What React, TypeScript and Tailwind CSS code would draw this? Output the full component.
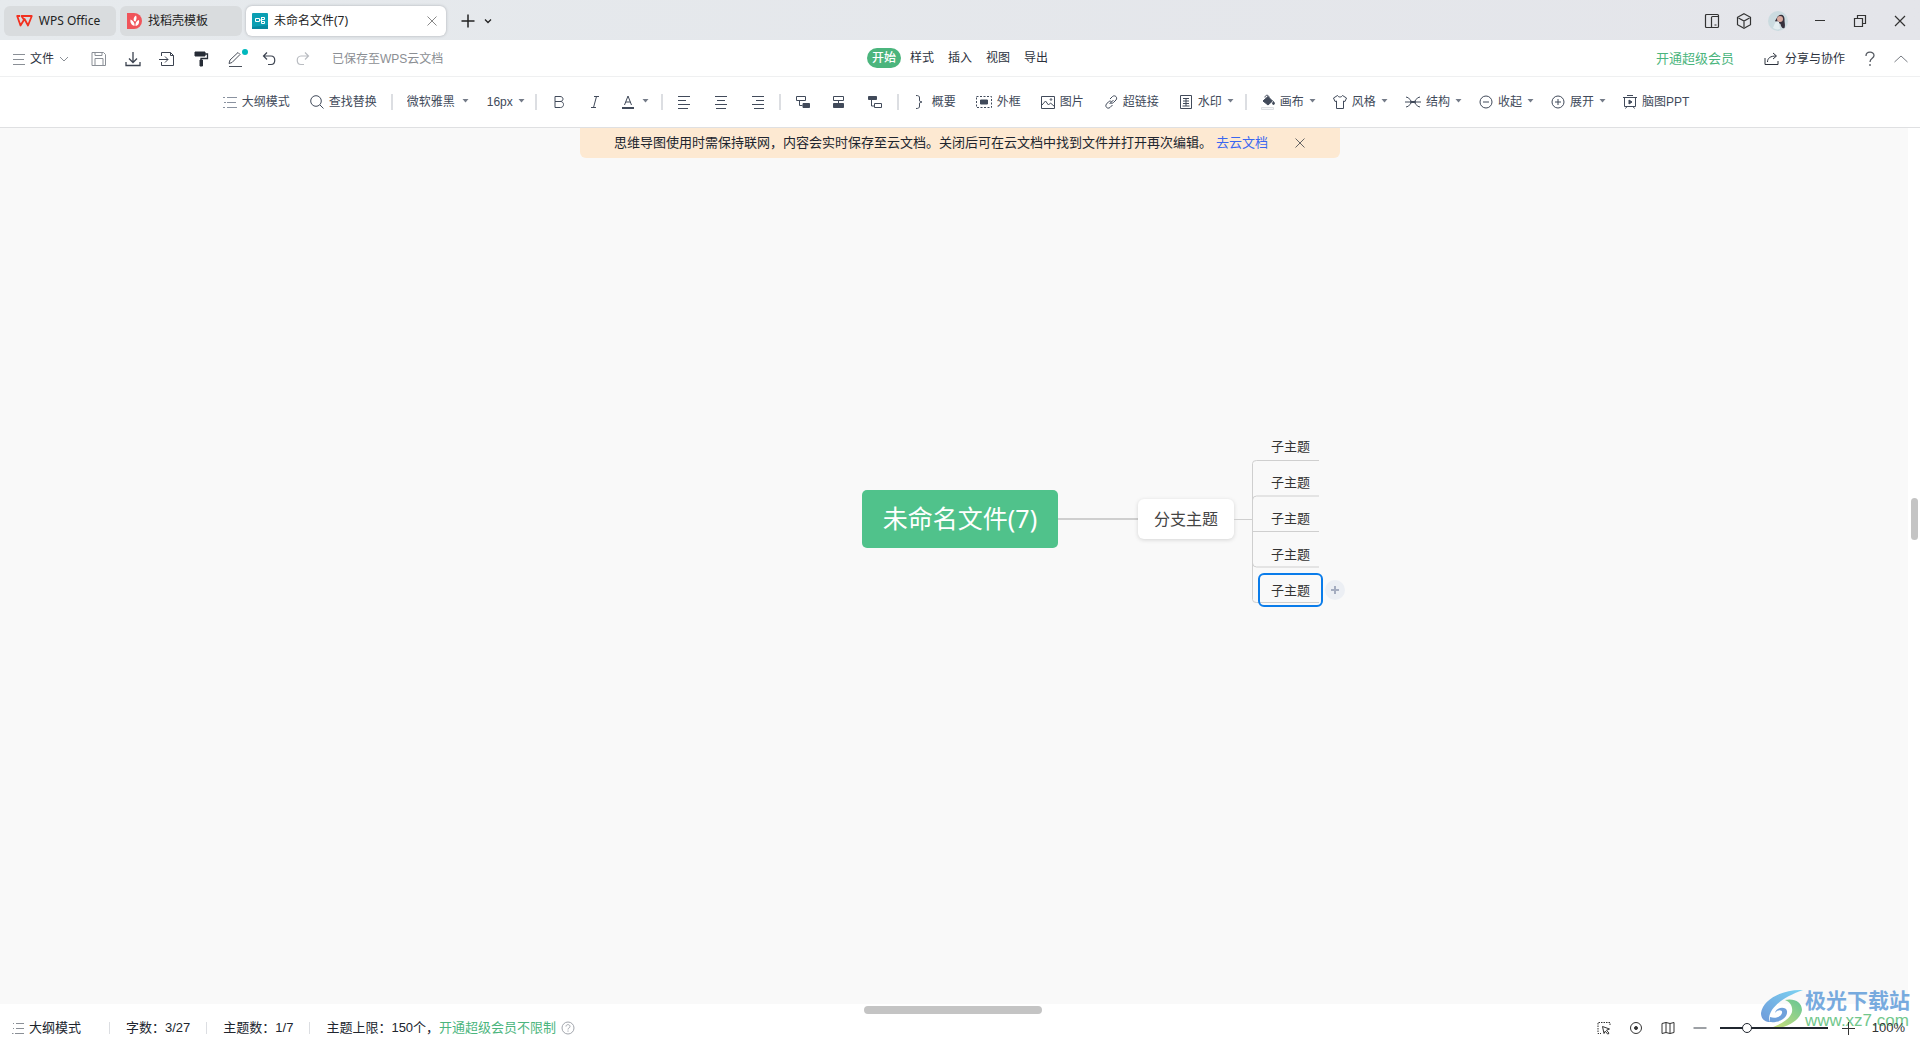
import { useState } from "react";
import type { ReactNode } from "react";
import clsx from "clsx";

const Svg = ({ w = 16, h = 16, sw = 1, children }: { w?: number; h?: number; sw?: number; children: ReactNode }) => (
  <svg width={w} height={h} viewBox={`0 0 ${w} ${h}`} fill="none" stroke="currentColor" strokeWidth={sw} className="shrink-0">
    {children}
  </svg>
);

const OutlineIcon = () => (
  <Svg w={14} h={14}>
    <path d="M4 2.5h10M4 7.5h9M4 12.5h10M0 2.5h2M1 7.5h2M0 12.5h2" />
  </Svg>
);

const Caret = () => (
  <svg width="7" height="6" viewBox="0 0 7 6" fill="#747b88" className="shrink-0">
    <path d="M0.5 0h6L3.5 3.5z" />
  </svg>
);

const Sep = () => <span className="mx-1 h-4 w-0.5 shrink-0 bg-[#dcdee2]" />;

const titleTools = [
  { id: "save", label: "保存", tone: "text-[#8a8f96]", icon: <Svg><path d="M1 1.5h11.5l2 2v11H1zM4 14.5v-7h8v7M4 1.5v3h7v-3" /></Svg> },
  { id: "download", label: "下载", tone: "text-[#3c4350]", icon: <Svg sw={1.3}><path d="M8 1v10M4 7.500l4 4 4-4M1 11v3.500h14V11" /></Svg> },
  { id: "export", label: "导出为", tone: "text-[#3c4350]", icon: <Svg><path d="M2.5 5V1.5h9l3 3v10h-12V11M0 8.5h9M6 5.500l3 3-3 3M11.5 1.500v3h3" /></Svg> },
  { id: "brush", label: "格式刷", tone: "text-[#262c36]", icon: <Svg><path d="M2 1h10v4H2z" fill="currentColor" /><path d="M12 3h2.5v4.5H8V15" strokeWidth="1.3" /><path d="M7 9h2.5v6H7z" fill="currentColor" /></Svg> },
  { id: "pen", label: "画笔", tone: "text-[#4a505b]", icon: <Svg><path d="M2 12.5l1-3.5L11 1.5l2 2L5 11.5zM2 15.5h13" /></Svg>, dot: true },
  { id: "undo", label: "撤销", tone: "text-[#3c4350]", icon: <Svg sw={1.2}><path d="M6 1.5L2.5 5 6 8.5M2.5 5H10c5 0 5 8.5 0 8.5H7" /></Svg> },
  { id: "redo", label: "重做", tone: "text-[#b9bcc1]", icon: <Svg sw={1.2}><path d="M10 1.5L13.5 5 10 8.5M13.5 5H6c-5 0-5 8.5 0 8.5H9" /></Svg> },
];

const menus = ["开始", "样式", "插入", "视图", "导出"];

const aligns = [
  { label: "左对齐", d: "M1 2.5h12M1 6.5h8M1 10.5h12M1 14.5h10" },
  { label: "居中", d: "M2 2.5h12M4 6.5h8M2 10.5h12M3 14.5h10" },
  { label: "右对齐", d: "M3 2.5h12M7 6.5h8M3 10.5h12M5 14.5h10" },
];

const topics = [
  { label: "子主题", icon: <Svg><path d="M1.5 2.5h9v4h-9zM4.5 6.5v5h3" /><path d="M8 9.500h6.5v4H8z" fill="currentColor" /></Svg> },
  { label: "同级主题", icon: <Svg><path d="M2.5 2.5h10v4h-10zM7.5 6.5v3" /><path d="M2.5 9.5h10v4h-10z" fill="currentColor" /></Svg> },
  { label: "父主题", icon: <Svg><path d="M1.5 2.5h8v3h-8z" fill="currentColor" /><path d="M4.5 6v6h3M7.5 9.5h7v4h-7z" /></Svg> },
];

type Tool = { label: string; icon: ReactNode; caret?: boolean };

const insertTools: Tool[] = [
  { label: "概要", icon: <Svg w={14}><path d="M3 1.5c2.5 0 3.500.5 3.500 2.500v2c0 1.500.5 2 2.500 2-2 0-2.500.5-2.500 2v2c0 2-1 2.500-3.500 2.500" /></Svg> },
  { label: "外框", icon: <Svg><path d="M.5 2.5h15v11H.5z" strokeDasharray="2 1.5" /><path d="M4.5 6h7v4h-7z" fill="currentColor" /></Svg> },
  { label: "图片", icon: <Svg w={14}><path d="M.5 2.5h13v12H.5zM1 11l3.5-4 3 4 2-2 4 3.5" /><circle cx="10" cy="5.5" r=".8" /></Svg> },
  { label: "超链接", icon: <Svg w={14}><path d="M5.5 10l4-4M6 5l2.5-2.5c2.500-2 5.500 1 3.500 3.500L9.500 8.500c-1 1-2.300 1-3.200.3M8.500 11L6 13.500c-2.500 2-5.500-1-3.500-3.500L4.500 7.800c1-.9 2-.9 3-.3" /></Svg> },
  { label: "水印", caret: true, icon: <Svg w={14}><path d="M1.5 1.5h11v13h-11z" /><path d="M4 4.5h6M4 7h6M4 9.5h6M3.5 12h7M7 4v8" /></Svg> },
];

const canvasTools: Tool[] = [
  { label: "画布", caret: true, icon: <Svg w={14}><path d="M2 7l5-4.5L11.5 7 7 11z" fill="currentColor" /><path d="M4 3.5c0-3 4-3 4 0" /><path d="M12.5 7.5c-1.5 2-1 3 0 3s1.500-1 0-3z" fill="currentColor" /><path d="M.5 13.5h12v2H.5z" stroke="#dcdee2" fill="#f6f7f8" /></Svg> },
  { label: "风格", caret: true, icon: <Svg w={14}><path d="M4.500 1.500L.5 4l1.500 3.500 1.500-.5v7.500h7V7l1.500.5L13.500 4l-4-2.500c-1 2-4 2-5 0z" /></Svg> },
  { label: "结构", caret: true, icon: <Svg><path d="M1 3c4 0 4 5 7 5s3-5 7-5M1 13c4 0 4-5 7-5s3 5 7 5M0 8h16" /><path d="M5.5 7.500h5v1h-5z" fill="currentColor" /></Svg> },
  { label: "收起", caret: true, icon: <Svg w={14}><circle cx="7" cy="8" r="6" /><path d="M4 8h6" /></Svg> },
  { label: "展开", caret: true, icon: <Svg w={14}><circle cx="7" cy="8" r="6" /><path d="M4 8h6M7 5v6" /></Svg> },
  { label: "脑图PPT", icon: <Svg w={14}><path d="M4 1.5h6M0 3.5h14M1.5 3.5v9h11v-9M4 12.5l-1.5 2M10 12.5l1.5 2" /><path d="M6 6l3 2-3 2z" fill="currentColor" /></Svg> },
];

const ToolButton = ({ tool }: { tool: Tool }) => (
  <button className={clsx("flex h-7 items-center gap-[5px] whitespace-nowrap pl-[10px]", tool.caret ? "pr-[7px]" : "pr-[10px]")}>
    {tool.icon}
    <span>{tool.label}</span>
    {tool.caret && <Caret />}
  </button>
);

const IconButton = ({ label, children }: { label: string; children: ReactNode }) => (
  <button aria-label={label} className="flex h-7 w-9 items-center justify-center">
    {children}
  </button>
);

const TitleBar = () => (
  <header className="flex h-10 items-center bg-gradient-to-r from-[#e6eaed] to-[#e4e5ea] pl-1 pt-0.5 font-['Noto_Sans','Noto_Sans_CJK_SC',sans-serif] text-[12px] text-[#222]">
    <button className="flex h-[30px] w-28 items-center justify-center gap-[6px] rounded-md bg-[#d9dcde] pr-1">
      <svg width="17" height="12" viewBox="0 0 17 12" fill="none" stroke="#f2301f" strokeWidth="1.8" strokeLinejoin="round">
        <path d="M4 1H1.200l3.300 9.500L8.500 4l3.500 6.500L15.800 1H5.500l3 4.500" />
      </svg>
      WPS Office
    </button>
    <button className="ml-1 flex h-[30px] w-[122px] items-center gap-[6px] rounded-md bg-[#d9dcde] pl-[7px]">
      <svg width="15" height="16" viewBox="0 0 15 16">
        <path d="M0 0h7a8 8 0 010 16H0z" fill="#f0545a" />
        <path d="M7.500 13C4 12 3 9 3.500 6.500c2 .5 3.500 2.500 4 4.500M7 8c-1-2 0-4.500 2-5.500 1 2 .5 4-.5 6M8.500 13c3-.5 4-3 3.500-6-2 .5-3 2-3.500 4" fill="#fff" />
      </svg>
      找稻壳模板
    </button>
    <div className="ml-1 flex h-[30px] w-[200px] items-center gap-[6px] rounded-md bg-white pl-[6px] pr-2 shadow-[0_0_3px_#a9adb2]">
      <svg width="16" height="16" viewBox="0 0 16 16" fill="none">
        <rect width="16" height="16" rx="1" fill="#0b9fb3" />
        <path d="M0 14l16-2v4H0z" fill="#0788a0" />
        <path d="M3.5 5.500h4v3h-4zM7.500 7h2M9.500 4v6.500M9.500 4.500h3v2h-3M9.500 10.500h3v-2h-3" stroke="#fff" />
      </svg>
      <button className="flex-1 text-left">未命名文件(7)</button>
      <button aria-label="关闭标签" className="text-[#888]">
        <Svg w={12} h={12}><path d="M1.500 1.500l9 9M10.500 1.500l-9 9" /></Svg>
      </button>
    </div>
    <button aria-label="新建" className="ml-[14px]">
      <Svg w={16} sw={1.5}><path d="M8 1.5v13M1.5 8h13" /></Svg>
    </button>
    <button aria-label="标签列表" className="ml-[6px]">
      <Svg w={12} h={12} sw={1.3}><path d="M3 4.5l3 3 3-3" /></Svg>
    </button>
    <div className="ml-auto flex items-center text-[#333]">
      <button aria-label="侧栏" className="flex w-8 justify-center">
        <Svg w={16} sw={1.2}>
          <rect x="1.5" y="1.5" width="13" height="13" rx="1" />
          <path d="M7.500 14.5V4.500q0-1 1-1h6M10.500 12h2" />
        </Svg>
      </button>
      <button aria-label="应用" className="flex w-8 justify-center">
        <Svg w={16} sw={1.2}><path d="M8 .8l6.500 3.500v7.400L8 15.200l-6.500-3.500V4.300zM2.500 5L8 8l5.500-3M8 8v6" /></Svg>
      </button>
      <button aria-label="账号" className="ml-2 flex w-5 justify-center">
        <svg width="20" height="20" viewBox="0 0 20 20">
          <circle cx="10" cy="10" r="10" fill="#cbdbe0" />
          <path d="M10 5c4-3 7 0 6.500 4 0 3 1 5 0 8-2 1-3.500-1-4-4L7 10z" fill="#35303c" />
          <circle cx="12" cy="8" r="3" fill="#d9aa9f" />
          <path d="M7 12c1-2 3-2 4-1l1 7c-3 1-5 0-7-1z" fill="#e4eef1" />
        </svg>
      </button>
      <button aria-label="最小化" className="ml-3 flex w-10 justify-center">
        <Svg w={12} h={12}><path d="M1 5.5h10" /></Svg>
      </button>
      <button aria-label="还原" className="flex w-10 justify-center">
        <Svg w={14} h={14} sw={1.2}><path d="M1.5 4.5h8v8h-8zM4.500 4.500v-3h8v8h-3" /></Svg>
      </button>
      <button aria-label="关闭" className="flex w-10 justify-center">
        <Svg w={12} h={12} sw={1.2}><path d="M1 1l10 10M11 1L1 11" /></Svg>
      </button>
    </div>
  </header>
);

const MenuBar = () => {
  const [active, setActive] = useState("开始");
  return (
    <nav className="grid h-[37px] grid-cols-[1fr_auto_1fr] items-center border-b border-[#eff0f1] text-[12px] text-[#2c323d]">
      <div className="flex items-center pl-3 pt-0.5">
        <button className="flex items-center gap-1 pr-3">
          <span className="text-[#8a8f96]">
            <Svg w={14} h={14}><path d="M1 2.500h12M1 7.500h11M1 12.500h12" /></Svg>
          </span>
          文件
          <span className="text-[#8a8f96]">
            <Svg w={12} h={12}><path d="M2 4l4 4 4-4" /></Svg>
          </span>
        </button>
        {titleTools.map((t) => (
          <button key={t.id} aria-label={t.label} className={clsx("relative flex w-[34px] justify-center", t.tone)}>
            {t.icon}
            {t.dot && <span className="absolute -top-0.5 right-1 size-[6px] rounded-full bg-[#00b8bd]" />}
          </button>
        ))}
        <span className="ml-3 text-[#8b8e93]">已保存至WPS云文档</span>
      </div>
      <div className="flex gap-1">
        {menus.map((m) => (
          <button
            key={m}
            onClick={() => setActive(m)}
            className={clsx("h-5 rounded-full px-[5px] leading-5", active === m && "bg-[#4bb57d] font-medium text-white")}
          >
            {m}
          </button>
        ))}
      </div>
      <div className="flex items-center justify-end pr-3 pt-0.5">
        <a href="#vip" className="text-[13px] text-[#4bb57d]">开通超级会员</a>
        <button className="ml-[30px] flex items-center gap-[6px]">
          <Svg w={15} h={14}><path d="M1 6v6.5h13V9M3.500 10c0-4 3-6 8.500-6M9 1l3.500 3L9 7" /></Svg>
          分享与协作
        </button>
        <button aria-label="帮助" className="ml-5 text-[#555a62]">
          <Svg w={10} h={16} sw={1.3}><path d="M1 5c0-5 8-5 8-.5C9 7.500 5 7 5 11M5 13v2" /></Svg>
        </button>
        <button aria-label="收起工具栏" className="ml-[19px] text-[#777b82]">
          <Svg w={14} h={14}><path d="M0.5 10L7 4l6.500 6" /></Svg>
        </button>
      </div>
    </nav>
  );
};

const Toolbar = () => (
  <div className="flex h-[51px] items-center justify-center border-b border-[#dfe0e2] pr-2 text-[12px] text-[#414a5a]">
    <button className="flex h-7 items-center gap-[5px] whitespace-nowrap px-[10px]">
      <span className="text-[#8a92a0]"><OutlineIcon /></span>
      大纲模式
    </button>
    <button className="flex h-7 items-center gap-[5px] whitespace-nowrap px-[10px]">
      <Svg w={14}><circle cx="6" cy="7" r="5.3" /><path d="M10 11l3.500 3.500" /></Svg>
      查找替换
    </button>
    <Sep />
    <label className="flex items-center gap-[7px] px-[10px]">
      <select aria-label="字体" defaultValue="yahei" className="w-12 appearance-none outline-none">
        <option value="yahei">微软雅黑</option>
        <option value="song">宋体</option>
      </select>
      <Caret />
    </label>
    <label className="flex items-center gap-[3px] pl-2 pr-[6px]">
      <select aria-label="字号" defaultValue="16" className="w-7 appearance-none outline-none">
        <option value="14">14px</option>
        <option value="16">16px</option>
      </select>
      <Caret />
    </label>
    <Sep />
    <IconButton label="加粗">
      <Svg><path d="M4 2.5h5c4 0 4 5 0 5H4zM4 7.500h5.500c4 0 4 6 0 6H4z" /></Svg>
    </IconButton>
    <IconButton label="斜体">
      <Svg><path d="M7 2.5h5M4 13.5h5M9.500 2.500l-3 11" /></Svg>
    </IconButton>
    <button aria-label="字体颜色" className="flex h-7 w-11 items-center justify-center gap-[7px]">
      <Svg w={14}><path d="M3.5 11L7 2l3.500 9M4.700 8h4.600" /><path d="M1 14h12" strokeWidth="2" /></Svg>
      <Caret />
    </button>
    <Sep />
    {aligns.map((a) => (
      <IconButton key={a.label} label={a.label}>
        <Svg><path d={a.d} /></Svg>
      </IconButton>
    ))}
    <Sep />
    {topics.map((t) => (
      <IconButton key={t.label} label={t.label}>{t.icon}</IconButton>
    ))}
    <Sep />
    {insertTools.map((t) => <ToolButton key={t.label} tool={t} />)}
    <Sep />
    {canvasTools.map((t) => <ToolButton key={t.label} tool={t} />)}
  </div>
);

const MindMap = () => {
  const subs = [0, 1, 2, 3, 4];
  return (
    <div className="absolute left-1/2 top-[302px] -ml-[98px] flex h-[178px] items-center font-['Noto_Sans','Noto_Sans_CJK_SC',sans-serif]">
      <div className="flex h-[58px] w-[196px] items-center justify-center rounded-[5px] bg-[#50c28b] text-[25px] text-white">
        未命名文件(7)
      </div>
      <span className="h-0.5 w-20 bg-[#cfcfcf]" />
      <div className="flex h-10 w-24 items-center justify-center rounded-md bg-white text-[16px] text-[#444] shadow-[0_1px_4px_rgba(0,0,0,0.15)]">
        分支主题
      </div>
      <span className="h-px w-[18px] bg-[#cfcfcf]" />
      <div className="relative h-[178px] w-[68px]">
        <svg width="68" height="178" viewBox="0 0 68 178" fill="none" stroke="#cfcfcf" className="absolute inset-0">
          <path d="M.5 89V33.500q0-3 4-3H67M.5 70q0-4 4-4H67M.5 101.500H67M.5 133q0 4 4 4H67M.5 89v80.500q0 3 4 3H67" />
        </svg>
        <ul className="absolute left-[6px] top-[-2px] flex flex-col text-[13px] leading-5 text-[#333]">
          {subs.map((s) => (
            <li key={s} className="flex h-9 items-center">
              <span
                className={clsx(
                  "flex h-[34px] w-[65px] items-center justify-center rounded-md border-2",
                  s === 4 ? "border-[#0a7cea]" : "border-transparent"
                )}
              >
                子主题
              </span>
              {s === 4 && (
                <button aria-label="添加主题" className="ml-[2px] flex size-5 items-center justify-center rounded-full bg-[#eceff4] text-[#a5adc0]">
                  <Svg w={8} h={8} sw={2}><path d="M4 0v8M0 4h8" /></Svg>
                </button>
              )}
            </li>
          ))}
        </ul>
      </div>
    </div>
  );
};

const StatusBar = () => {
  const [zoom, setZoom] = useState(23);
  return (
    <footer className="bg-white">
      <div className="flex h-3 items-center pl-[45%]">
        <span className="h-2 w-[178px] rounded-full bg-[#c4c4c4]" />
      </div>
      <div className="flex h-6 items-center pl-3 pr-[15px] text-[13px] text-[#20252e]">
        <button className="flex items-center gap-1">
          <span className="text-[#8a8f96]">
            <Svg w={13} h={14}><path d="M4 2.5h8M4 7.5h8M3 12.5h9M1 2.5h1M1 7.5h1M0 12.5h1.500" /></Svg>
          </span>
          大纲模式
        </button>
        <span className="ml-7 mr-4 h-3 w-px bg-[#dcdee2]" />
        <span>字数：3/27</span>
        <span className="mx-4 h-3 w-px bg-[#dcdee2]" />
        <span>主题数：1/7</span>
        <span className="mx-4 h-3 w-px bg-[#dcdee2]" />
        <span>主题上限：150个，</span>
        <a href="#vip" className="text-[#4bb57d]">开通超级会员不限制</a>
        <button aria-label="说明" className="ml-[5px] text-[#a2a6ad]">
          <Svg w={14} h={14}><circle cx="7" cy="7" r="6" /><path d="M5 5.500c0-2.500 4-2.500 4 0C9 7 7 6.800 7 8.500M7 9.500v1.200" /></Svg>
        </button>
        <div className="relative z-10 ml-auto flex items-center text-[#333]">
          <button aria-label="框选" className="flex w-8 justify-center">
            <Svg w={14} h={14}><path d="M13 4V1.500H1V12.500H4" strokeDasharray="1.5 1" /><path d="M5.500 5.500l7 2.500-3 1.200 2.500 3-1.200 1-2.600-3-1.200 2.300z" /></Svg>
          </button>
          <button aria-label="定位" className="flex w-8 justify-center">
            <Svg w={14} h={14}><circle cx="7" cy="7" r="5.5" /><circle cx="7" cy="7" r="1.5" fill="currentColor" /></Svg>
          </button>
          <button aria-label="地图" className="flex w-8 justify-center">
            <Svg w={14} h={14}><path d="M1 2.500l4-1 4 1 4-1v10l-4 1-4-1-4 1zM5 1.500v10M9 2.500v10" /></Svg>
          </button>
          <button aria-label="缩小" className="flex w-8 justify-center text-[#7d8187]">
            <Svg w={14} h={14} sw={1.5}><path d="M.5 7h13" /></Svg>
          </button>
          <input
            type="range"
            aria-label="缩放"
            value={zoom}
            onChange={(e) => setZoom(Number(e.target.value))}
            className="ml-1 h-3 w-[108px] appearance-none bg-transparent [&::-webkit-slider-runnable-track]:h-0.5 [&::-webkit-slider-runnable-track]:bg-[#20262f] [&::-webkit-slider-thumb]:-mt-1 [&::-webkit-slider-thumb]:size-[10px] [&::-webkit-slider-thumb]:appearance-none [&::-webkit-slider-thumb]:rounded-full [&::-webkit-slider-thumb]:border [&::-webkit-slider-thumb]:border-[#20262f] [&::-webkit-slider-thumb]:bg-white"
          />
          <button aria-label="放大" className="ml-3 flex w-4 justify-center">
            <Svg w={14} h={14}><path d="M7.500 1v13M1 7.500h13" /></Svg>
          </button>
          <span className="ml-4">100%</span>
        </div>
      </div>
    </footer>
  );
};

const SiteMark = () => (
  <div className="pointer-events-none absolute bottom-[9px] right-[10px] flex items-center gap-0.5 opacity-90">
    <svg width="42" height="42" viewBox="0 0 42 42">
      <defs>
        <linearGradient id="blue" x1="0" y1="1" x2="1" y2="0">
          <stop offset="0" stopColor="#5f8fd6" />
          <stop offset="1" stopColor="#6fd0f2" />
        </linearGradient>
        <linearGradient id="green" x1="0" y1="1" x2="1" y2="0">
          <stop offset="0" stopColor="#d5e06a" />
          <stop offset="1" stopColor="#55c08a" />
        </linearGradient>
      </defs>
      <path d="M42 1C22 0 2 10 0 24c0 6 4 9 9 9C5 24 16 10 42 1z" fill="url(#blue)" />
      <path d="M9 33c9 1 18-4 17-11-1-5-11-4-12 2 3-4 8-3 7 0-1 4-7 6-12 4z" fill="#5f97d8" />
      <path d="M24 11c9-2 17 2 17 10C39 33 22 41 5 40c12-3 24-9 26-17 1-6-2-10-7-12z" fill="url(#green)" />
    </svg>
    <div className="flex flex-col">
      <span className="h-[22px] text-[21px] font-bold leading-[22px] text-[#6aa2dc]">极光下载站</span>
      <span className="h-[18px] text-[17px] leading-[18px] text-[#63c27f]">www.xz7.com</span>
    </div>
  </div>
);

export default function App() {
  const [tip, setTip] = useState(true);
  return (
    <div className="relative flex h-screen flex-col overflow-hidden bg-white font-['Liberation_Sans','Noto_Sans_CJK_SC',sans-serif]">
      <TitleBar />
      <MenuBar />
      <Toolbar />
      <div className="flex min-h-0 flex-1">
        <main className="relative flex-1 bg-[#f9f9f9]">
          {tip && (
            <div className="ml-[580px] mr-[568px] flex h-[30px] items-center justify-center rounded-b-md bg-[#fde9d2] text-[13px] text-[#20252e]">
              <span className="whitespace-nowrap">思维导图使用时需保持联网，内容会实时保存至云文档。关闭后可在云文档中找到文件并打开再次编辑。</span>
              <a href="#cloud" className="ml-1 whitespace-nowrap text-[#3a67f0]">去云文档</a>
              <button aria-label="关闭提示" onClick={() => setTip(false)} className="ml-[26px] text-[#666]">
                <Svg w={12} h={12}><path d="M1.500 1.500l9 9M10.500 1.500l-9 9" /></Svg>
              </button>
            </div>
          )}
        </main>
        <div className="flex w-3 justify-center pt-[370px]">
          <span className="h-[42px] w-[7px] rounded-full bg-[#c4c4c4]" />
        </div>
        <div className="absolute inset-x-0 top-32 h-0">
          <MindMap />
        </div>
      </div>
      <StatusBar />
      <SiteMark />
    </div>
  );
}
